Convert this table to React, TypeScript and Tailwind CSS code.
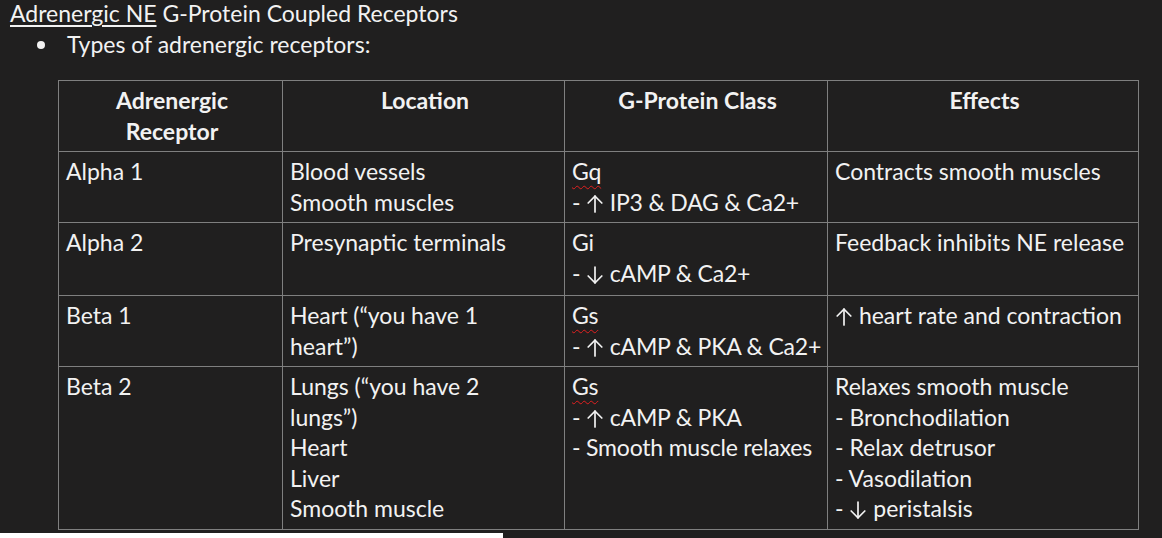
const rows = [
  {
    h: "h-[71px]",
    receptor: ["Alpha 1"],
    location: ["Blood vessels", "Smooth muscles"],
    gclass: "Gq",
    gLines: [["up", "IP3 & DAG & Ca2+"]],
    effects: [["", "Contracts smooth muscles"]],
  },
  {
    h: "h-[73px]",
    receptor: ["Alpha 2"],
    location: ["Presynaptic terminals"],
    gclass: "Gi",
    gLines: [["down", "cAMP & Ca2+"]],
    effects: [["", "Feedback inhibits NE release"]],
  },
  {
    h: "h-[71px]",
    receptor: ["Beta 1"],
    location: ["Heart (\u201cyou have 1", "heart\u201d)"],
    gclass: "Gs",
    gLines: [["up", "cAMP & PKA & Ca2+"]],
    effects: [["upnodash", "heart rate and contraction"]],
  },
  {
    h: "h-[163px]",
    receptor: ["Beta 2"],
    location: ["Lungs (\u201cyou have 2", "lungs\u201d)", "Heart", "Liver", "Smooth muscle"],
    gclass: "Gs",
    gLines: [
      ["up", "cAMP & PKA"],
      ["", "Smooth muscle relaxes"],
    ],
    effects: [
      ["plain", "Relaxes smooth muscle"],
      ["", "Bronchodilation"],
      ["", "Relax detrusor"],
      ["", "Vasodilation"],
      ["down", "peristalsis"],
    ],
  },
];

function Arrow({ dir, first }: { dir: "up" | "down"; first?: boolean }) {
  return (
    <svg
      width="16"
      height="18"
      viewBox="0 0 16 18"
      className={`inline-block align-[-2px] mr-[1px] ${first ? "ml-[1px]" : "ml-[1px]"}`}
      fill="none"
      stroke="#f2f2f2"
      strokeWidth="1.7"
      strokeLinecap="round"
    >
      {dir === "up" ? (
        <>
          <path d="M8 1.2 V17" />
          <path d="M1.2 8 L8 1.2 L14.8 8" />
        </>
      ) : (
        <>
          <path d="M8 1 V16.8" />
          <path d="M1.2 10 L8 16.8 L14.8 10" />
        </>
      )}
    </svg>
  );
}

function Line({ kind, text }: { kind: string; text: string }) {
  if (kind === "plain") return <div className="whitespace-nowrap">{text}</div>;
  if (kind === "upnodash")
    return (
      <div className="whitespace-nowrap">
        <Arrow dir="up" first /> {text}
      </div>
    );
  if (kind === "up" || kind === "down")
    return (
      <div className="whitespace-nowrap">
        - <Arrow dir={kind} /> {text}
      </div>
    );
  return <div className="whitespace-nowrap">- {text}</div>;
}

const cell = "border border-[#7f7f7f] align-top pl-[7px] pr-[4px] pt-[4px] pb-0";

export default function App() {
  return (
    <div
      className="h-screen bg-[#201f1f] text-[#f2f2f2] text-[23px] leading-[30.5px] overflow-hidden"
      style={{ fontFamily: "Lato, 'Open Sans', sans-serif" }}
    >
      <div className="pl-[10px] -mt-[2px] leading-[31px]">
        <span className="underline decoration-[1.5px] underline-offset-[3px]">Adrenergic NE</span> G-Protein
        Coupled Receptors
      </div>
      <div className="flex items-center leading-[31px]">
        <span className="ml-[37px] mr-[22px] w-[8px] h-[8px] rounded-full bg-[#f2f2f2]" />
        <span>Types of adrenergic receptors:</span>
      </div>

      <div className="pl-[58px] pt-[20px]">
        <table className="border-collapse table-fixed w-[1081px]">
          <colgroup>
            <col className="w-[224px]" />
            <col className="w-[282px]" />
            <col className="w-[263px]" />
            <col className="w-[311px]" />
          </colgroup>
          <thead>
            <tr className="h-[71px] font-bold">
              <th className={`${cell} text-center`}>
                Adrenergic
                <br />
                Receptor
              </th>
              <th className={`${cell} text-center`}>Location</th>
              <th className={`${cell} text-center`}>G-Protein Class</th>
              <th className={`${cell} text-center`}>Effects</th>
            </tr>
          </thead>
          <tbody>
            {rows.map((r) => (
              <tr key={r.receptor[0]} className={r.h}>
                <td className={cell}>{r.receptor[0]}</td>
                <td className={cell}>
                  {r.location.map((l) => (
                    <div key={l}>{l}</div>
                  ))}
                </td>
                <td className={`${cell} tracking-[-0.2px]`}>
                  <div>
                    <span
                      className={
                        r.gclass === "Gi"
                          ? ""
                          : "underline decoration-wavy decoration-[#e02020] decoration-[1px] underline-offset-[5px]"
                      }
                    >
                      {r.gclass}
                    </span>
                  </div>
                  {r.gLines.map(([k, t]) => (
                    <Line key={t} kind={k} text={t} />
                  ))}
                </td>
                <td className={cell}>
                  {r.effects.map(([k, t], i) =>
                    i === 0 && k === "" ? (
                      <div key={t} className="whitespace-nowrap">
                        {t}
                      </div>
                    ) : (
                      <Line key={t} kind={k} text={t} />
                    )
                  )}
                </td>
              </tr>
            ))}
          </tbody>
        </table>
      </div>
      <div className="mt-[3px] w-[503px] h-[10px] bg-white" />
    </div>
  );
}
